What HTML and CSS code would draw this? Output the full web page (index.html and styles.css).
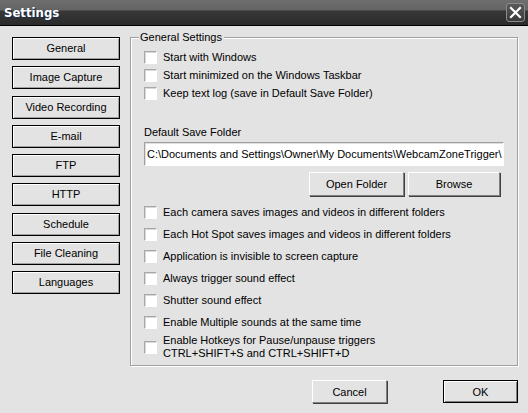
FILE: index.html
```html
<!DOCTYPE html>
<html>
<head>
<meta charset="utf-8">
<link rel="stylesheet" href="styles.css">
</head>
<body>
<div class="window">
  <div class="titlebar">
    <span class="title">Settings</span>
    <span class="close"><svg width="13" height="13" viewBox="0 0 13 13"><path d="M2 2 L11 11 M11 2 L2 11" stroke="#fff" stroke-width="2.2" stroke-linecap="square"/></svg></span>
  </div>
  <div class="content">
    <div class="nav">
      <div class="navbtn">General</div>
      <div class="navbtn">Image Capture</div>
      <div class="navbtn">Video Recording</div>
      <div class="navbtn">E-mail</div>
      <div class="navbtn">FTP</div>
      <div class="navbtn">HTTP</div>
      <div class="navbtn">Schedule</div>
      <div class="navbtn">File Cleaning</div>
      <div class="navbtn">Languages</div>
    </div>
    <div class="right">
      <div class="group">
        <span class="legend">General Settings</span>
        <div class="checks top">
          <div class="row"><span class="cb"></span><span>Start with Windows</span></div>
          <div class="row"><span class="cb"></span><span>Start minimized on the Windows Taskbar</span></div>
          <div class="row"><span class="cb"></span><span>Keep text log (save in Default Save Folder)</span></div>
        </div>
        <div class="label">Default Save Folder</div>
        <div class="textbox">C:\Documents and Settings\Owner\My Documents\WebcamZoneTrigger\</div>
        <div class="btnrow">
          <div class="btn openf">Open Folder</div>
          <div class="btn browse">Browse</div>
        </div>
        <div class="checks bottom">
          <div class="row r2"><span class="cb"></span><span>Each camera saves images and videos in different folders</span></div>
          <div class="row r2"><span class="cb"></span><span>Each Hot Spot saves images and videos in different folders</span></div>
          <div class="row r2"><span class="cb"></span><span>Application is invisible to screen capture</span></div>
          <div class="row r2"><span class="cb"></span><span>Always trigger sound effect</span></div>
          <div class="row r2"><span class="cb"></span><span>Shutter sound effect</span></div>
          <div class="row r2"><span class="cb"></span><span>Enable Multiple sounds at the same time</span></div>
          <div class="row r2 two"><span class="cb"></span><span>Enable Hotkeys for Pause/unpause triggers<br>CTRL+SHIFT+S and CTRL+SHIFT+D</span></div>
        </div>
      </div>
      <div class="footer">
        <div class="btn cancel">Cancel</div>
        <div class="btn ok">OK</div>
      </div>
    </div>
  </div>
</div>
</body>
</html>
```
FILE: styles.css
```css
* { box-sizing: border-box; }
html, body { margin: 0; padding: 0; }
body {
  width: 528px;
  height: 413px;
  overflow: hidden;
  background: #e3e3e3;
  font-family: "Liberation Sans", Arial, sans-serif;
  font-size: 11px;
  color: #000;
}
.window { width: 528px; height: 413px; display: flex; flex-direction: column; }
.titlebar {
  height: 26px;
  flex: none;
  display: flex;
  align-items: center;
  justify-content: space-between;
  padding: 0 3px 0 4px;
  background: linear-gradient(to bottom, #6e6e6e 0, #646464 10px, #383838 11px, #2a2a2a 25px, #000 25px);
}
.title {
  color: #fff;
  font-family: "DejaVu Sans Condensed", "DejaVu Sans", sans-serif;
  font-weight: bold;
  font-size: 13px;
  text-shadow: 1px 1px 0 #1a2a50;
  margin-top: -1px;
}
.close {
  width: 19px;
  height: 19px;
  border: 1px solid #8a8a8a;
  border-radius: 3px;
  background: linear-gradient(to bottom, #5a5a5a, #3a3a3a);
  display: flex;
  align-items: center;
  justify-content: center;
  margin-top: -1px;
}
.content { flex: 1; display: flex; }
.nav {
  width: 130px;
  padding: 11px 0 0 12px;
  display: flex;
  flex-direction: column;
  gap: 6.25px;
}
.navbtn {
  width: 108px;
  height: 23px;
  border: 1px solid #000;
  box-shadow: inset 1px 1px 0 #fff, inset -1px -1px 0 #a0a0a0;
  display: flex;
  align-items: center;
  justify-content: center;
  padding-bottom: 1px;
}
.right { flex: 1; padding-top: 11px; display: flex; flex-direction: column; }
.group {
  position: relative;
  width: 388px;
  height: 329px;
  border: 1px solid #a0a0a0;
  box-shadow: 1px 1px 0 #fff, inset 1px 1px 0 #fff;
  padding: 0 0 0 13px;
}
.legend {
  position: absolute;
  left: 8px;
  top: -7px;
  padding: 0 2px 0 1px;
  background: #e3e3e3;
  line-height: 13px;
}
.checks { display: flex; flex-direction: column; }
.checks.top { padding-top: 10px; }
.row { height: 18px; display: flex; align-items: center; gap: 6px; }
.row.r2 { height: 22px; }
.row.two { height: 28px; line-height: 13px; }
.cb {
  width: 13px;
  height: 13px;
  flex: none;
  background: #fff;
  border-top: 1px solid #a8a8a8;
  border-left: 1px solid #a8a8a8;
  border-right: 1px solid #fff;
  border-bottom: 1px solid #fff;
  box-shadow: inset 1px 1px 0 #d8d8d8;
}
.label { margin-top: 23px; height: 14px; line-height: 14px; }
.textbox {
  margin-top: 3px;
  width: 360px;
  height: 24px;
  background: #fff;
  border-top: 1px solid #a0a0a0;
  border-left: 1px solid #a0a0a0;
  border-bottom: 1px solid #fff;
  border-right: 1px solid #fff;
  box-shadow: inset 1px 1px 0 #e0e0e0;
  padding: 0 0 0 2px;
  line-height: 22px;
  white-space: nowrap;
  overflow: hidden;
}
.btnrow { display: flex; gap: 4px; margin: 6px 0 0 165px; }
.btn {
  height: 24px;
  display: flex;
  align-items: center;
  justify-content: center;
  border-top: 1px solid #fff;
  border-left: 1px solid #fff;
  border-right: 1px solid #808080;
  border-bottom: 1px solid #808080;
  box-shadow: 1px 1px 0 #404040;
}
.openf { width: 95px; }
.browse { width: 92px; }
.checks.bottom { margin-top: 5px; }
.footer { display: flex; padding: 14px 0 0 182px; gap: 56px; }
.cancel { width: 75px; height: 23px; }
.ok {
  width: 75px; height: 23px;
  border: 1px solid #000;
  box-shadow: inset 1px 1px 0 #fff, inset -1px -1px 0 #808080;
}
```
